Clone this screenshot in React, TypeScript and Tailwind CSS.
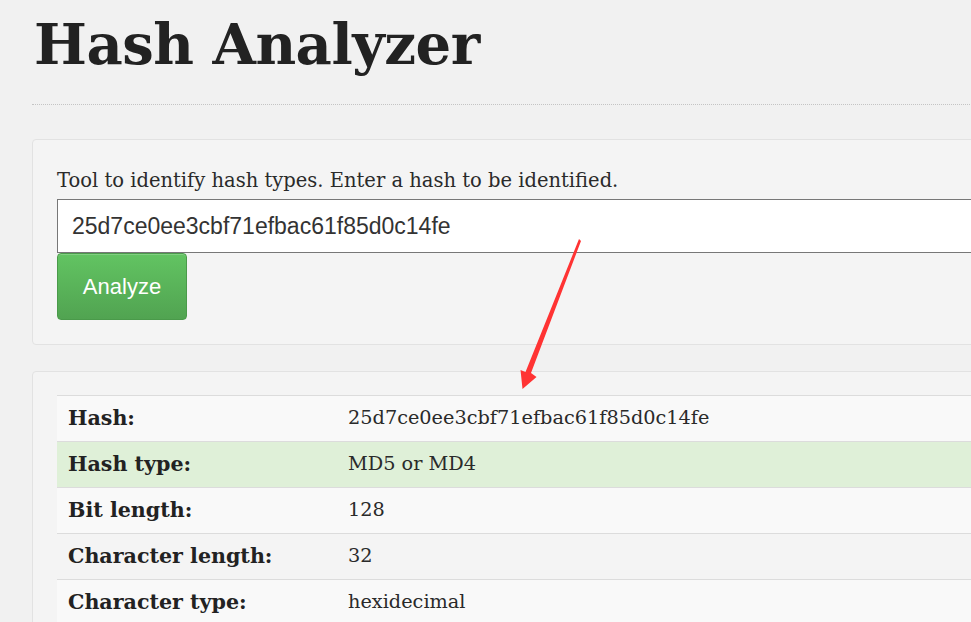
import React from 'react';

const ROWS: { label: string; value: string; success?: boolean; tone: 'light' | 'mid' }[] = [
  { label: 'Hash:', value: '25d7ce0ee3cbf71efbac61f85d0c14fe', tone: 'light' },
  { label: 'Hash type:', value: 'MD5 or MD4', success: true, tone: 'mid' },
  { label: 'Bit length:', value: '128', tone: 'light' },
  { label: 'Character length:', value: '32', tone: 'mid' },
  { label: 'Character type:', value: 'hexidecimal', tone: 'light' },
];

function Arrow() {
  return (
    <svg className="absolute left-0 top-0 pointer-events-none" width="971" height="622" viewBox="0 0 971 622">
      <polygon
        points="579,239 581,241 531,373 536.5,377 522.5,389 520.5,370 525.5,372"
        fill="#ff3333"
      />
    </svg>
  );
}

export default function App() {
  return (
    <div
      className="relative w-[971px] h-[622px] overflow-hidden bg-[#f1f1f1] text-[#222]"
      style={{ fontFamily: '"DejaVu Serif", Georgia, serif' }}
    >
      <div className="w-[1200px] pl-[32px]">
        <h1 className="pl-[2px] pt-[8px] text-[56px] leading-[72px] font-bold tracking-[-0.5px]">Hash Analyzer</h1>
        <div className="mt-[24px] border-b border-dotted border-[#c4c4c4]" />

        {/* input panel */}
        <div className="mt-[34px] rounded-[4px] border border-[#e2e2e2] bg-[#f4f4f4] pl-[24px] pt-[28px] pb-[24px]">
          <p className="text-[19.5px] leading-[26px] text-[#2a2a2a]">Tool to identify hash types. Enter a hash to be identified.</p>
          <div className="mt-[5px] h-[54px] border border-[#777] bg-white flex items-center pl-[14px]">
            <span
              className="text-[23px] text-[#333]"
              style={{ fontFamily: '"Liberation Sans", Arial, sans-serif' }}
            >
              25d7ce0ee3cbf71efbac61f85d0c14fe
            </span>
          </div>
          <button
            className="w-[130px] h-[67px] rounded-[4px] border border-[#4a9a4a] bg-gradient-to-b from-[#62c462] to-[#51a351] text-white text-[22px] shadow-[inset_0_1px_0_rgba(255,255,255,0.2)]"
            style={{ fontFamily: '"Liberation Sans", Arial, sans-serif' }}
          >
            Analyze
          </button>
        </div>

        {/* results panel */}
        <div className="mt-[26px] rounded-[4px] border border-[#e2e2e2] bg-[#f4f4f4] pl-[24px] pt-[23px] pb-[24px]">
          <table className="w-full border-collapse text-[19.3px]">
            <tbody>
              {ROWS.map((r) => (
                <tr
                  key={r.label}
                  className={`h-[46px] border-t border-[#dcdcdc] ${
                    r.success ? 'bg-[#dff0d8]' : r.tone === 'light' ? 'bg-[#f9f9f9]' : 'bg-[#f4f4f4]'
                  }`}
                >
                  <td className="w-[280px] pl-[11px] text-[20.6px] font-bold text-[#222]">{r.label}</td>
                  <td className="pl-[11px] text-[#2a2a2a]">{r.value}</td>
                </tr>
              ))}
            </tbody>
          </table>
        </div>
      </div>
      <Arrow />
    </div>
  );
}
